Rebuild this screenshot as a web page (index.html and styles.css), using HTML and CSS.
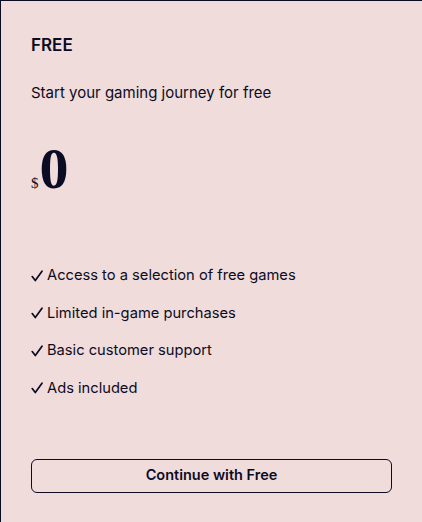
FILE: index.html
```html
<!DOCTYPE html>
<html lang="en">
<head>
<meta charset="utf-8">
<link rel="stylesheet" href="styles.css">
</head>
<body>
<div class="card">
  <h2 class="plan">FREE</h2>
  <p class="desc">Start your gaming journey for free</p>
  <div class="price"><span class="currency">$</span><span class="amount">0</span></div>
  <ul class="features">
    <li><svg class="check" viewBox="0 0 12 12"><path d="M1.2 6.6 L4.3 10.6 L11 1.2"/></svg>Access to a selection of free games</li>
    <li><svg class="check" viewBox="0 0 12 12"><path d="M1.2 6.6 L4.3 10.6 L11 1.2"/></svg>Limited in-game purchases</li>
    <li><svg class="check" viewBox="0 0 12 12"><path d="M1.2 6.6 L4.3 10.6 L11 1.2"/></svg>Basic customer support</li>
    <li><svg class="check" viewBox="0 0 12 12"><path d="M1.2 6.6 L4.3 10.6 L11 1.2"/></svg>Ads included</li>
  </ul>
  <button class="cta">Continue with Free</button>
</div>
</body>
</html>
```
FILE: styles.css
```css
html, body {
  margin: 0;
  padding: 0;
  overflow: hidden;
  background: #f0dcda;
}
.card {
  box-sizing: border-box;
  width: 423px;
  height: 522px;
  background: #f0dcda;
  border: 1px solid #0c0b24;
  border-bottom: none;
  padding: 35px 30px 0 30px;
  color: #0c0b24;
  font-family: Inter, "Noto Sans", sans-serif;
  display: flex;
  flex-direction: column;
}
.plan {
  margin: 0;
  font-size: 17px;
  font-weight: 600;
  line-height: 18px;
}
.desc {
  margin: 30px 0 0 0;
  font-size: 15px;
  line-height: 18px;
}
.price {
  margin-top: 37px;
  display: flex;
  align-items: baseline;
  height: 60px;
}
.currency {
  font-family: "Liberation Serif", serif;
  font-size: 15px;
  margin-right: 1px;
}
.amount {
  font-family: "Liberation Serif", serif;
  font-size: 58px;
  font-weight: 700;
  line-height: 60px;
}
.features {
  list-style: none;
  margin: 67px 0 0 0;
  padding: 0;
  display: flex;
  flex-direction: column;
  gap: 18.6px;
}
.features li {
  font-size: 14.7px;
  line-height: 19px;
  display: flex;
  align-items: center;
  gap: 4px;
}
.check {
  width: 12px;
  height: 12px;
  flex-shrink: 0;
  fill: none;
  stroke: #0c0b24;
  stroke-width: 1.7;
  stroke-linecap: round;
  stroke-linejoin: round;
}
.cta {
  margin-top: 61px;
  height: 34px;
  flex-shrink: 0;
  border: 1px solid #0c0b24;
  border-radius: 6px;
  background: transparent;
  color: #0c0b24;
  font-family: Inter, "Noto Sans", sans-serif;
  font-size: 14.5px;
  font-weight: 600;
  padding: 0 0 2px 0;
}
```
